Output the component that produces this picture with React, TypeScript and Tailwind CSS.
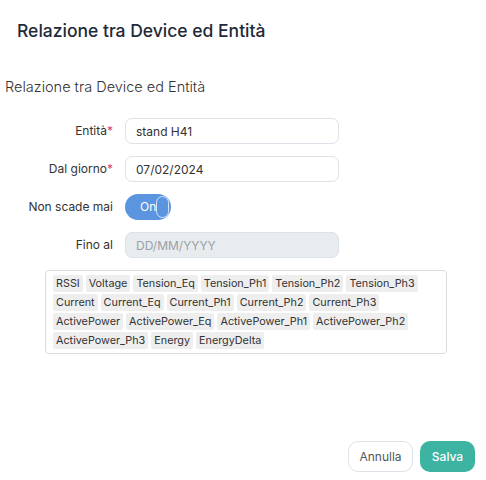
const TAGS = [
  "RSSI",
  "Voltage",
  "Tension_Eq",
  "Tension_Ph1",
  "Tension_Ph2",
  "Tension_Ph3",
  "Current",
  "Current_Eq",
  "Current_Ph1",
  "Current_Ph2",
  "Current_Ph3",
  "ActivePower",
  "ActivePower_Eq",
  "ActivePower_Ph1",
  "ActivePower_Ph2",
  "ActivePower_Ph3",
  "Energy",
  "EnergyDelta",
];

function Row({ label, required, children }: { label: string; required?: boolean; children: React.ReactNode }) {
  return (
    <div className="flex items-center h-[26px]">
      <label className="w-[115px] pr-[2px] text-right text-[12px] text-[#333]">
        {label}
        {required && <span className="text-[#e0405a]">*</span>}
      </label>
      <div className="ml-[10px] w-[214px]">{children}</div>
    </div>
  );
}

export default function App() {
  return (
    <div className="w-[486px] h-[480px] bg-white font-['Inter',sans-serif] flex flex-col">
      <h1 className="pl-[17px] pt-[19px] text-[17.5px] font-medium text-[#1e2a38] leading-[24px]">
        Relazione tra Device ed Entità
      </h1>

      <h2 className="pl-[5px] mt-[34px] text-[14.5px] font-light text-[#333] leading-[20px]">
        Relazione tra Device ed Entità
      </h2>

      <div className="mt-[21px] flex flex-col gap-[12px]">
        <Row label="Entità" required>
          <input
            defaultValue="stand H41"
            className="w-full h-[26px] px-[10px] text-[12px] text-[#333] border border-[#dde2e8] rounded-[7px] outline-none"
          />
        </Row>
        <Row label="Dal giorno" required>
          <input
            defaultValue="07/02/2024"
            className="w-full h-[26px] px-[10px] text-[12px] text-[#333] border border-[#dde2e8] rounded-[7px] outline-none"
          />
        </Row>
        <Row label="Non scade mai">
          <div className="w-[46px] h-[26px] rounded-full bg-[#5b95e0] flex items-center justify-between pl-[15px] pr-[2px]">
            <span className="text-[12px] text-white">On</span>
            <span className="w-[20px] h-[22px] rounded-full border border-[#d6e4f7] bg-[#5b95e0]" />
          </div>
        </Row>
        <Row label="Fino al">
          <input
            disabled
            placeholder="DD/MM/YYYY"
            className="w-full h-[26px] px-[10px] text-[12px] bg-[#e9ecef] placeholder:text-[#9aa0a6] border border-[#dde2e8] rounded-[7px] outline-none"
          />
        </Row>
      </div>

      <div className="ml-[45px] mt-[12px] w-[402px] h-[84px] border border-[#d9dde2] rounded-[4px] px-[7px] py-[4px] flex flex-wrap content-start gap-x-[3px] gap-y-[2px]">
        {TAGS.map((t) => (
          <span key={t} className="h-[17px] px-[3px] bg-[#eeeeee] rounded-[2px] text-[10.8px] leading-[17px] text-[#333]">
            {t}
          </span>
        ))}
      </div>

      <div className="mt-auto mb-[8px] pr-[11px] flex justify-end gap-[7px]">
        <button className="w-[65px] h-[31px] rounded-[10px] border border-[#dde2e8] bg-white text-[12px] text-[#555]">
          Annulla
        </button>
        <button className="w-[55px] h-[31px] rounded-[10px] bg-[#3db3a2] text-[12px] font-medium text-white">
          Salva
        </button>
      </div>
    </div>
  );
}
